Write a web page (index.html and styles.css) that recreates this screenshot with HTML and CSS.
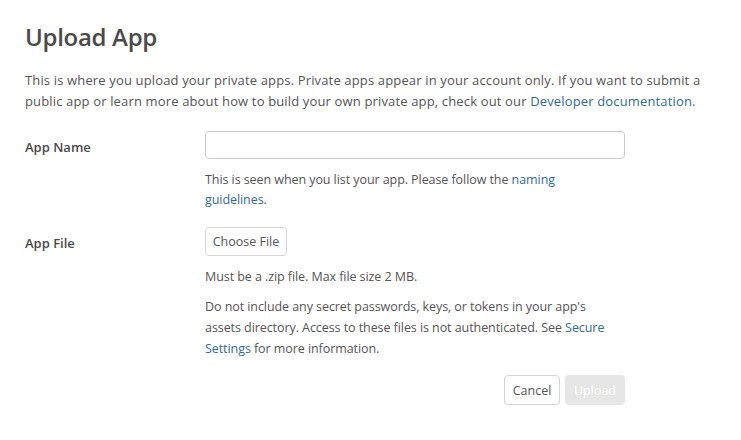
FILE: index.html
```html
<!DOCTYPE html>
<html lang="en">
<head>
<meta charset="utf-8">
<title>Upload App</title>
<link rel="stylesheet" href="styles.css">
</head>
<body>
<main class="page">
  <h1 class="title">Upload App</h1>
  <p class="intro">This is where you upload your private apps. Private apps appear in your account only. If you want to submit a public app or learn more about how to build your own private app, check out our <a href="#" class="link">Developer documentation</a>.</p>
  <form class="form">
    <div class="row">
      <label class="label" for="app-name">App Name</label>
      <div class="field">
        <input class="input" id="app-name" type="text">
        <p class="hint">This is seen when you list your app. Please follow the <a href="#" class="link">naming guidelines</a>.</p>
      </div>
    </div>
    <div class="row">
      <label class="label">App File</label>
      <div class="field">
        <button type="button" class="btn btn-file">Choose File</button>
        <p class="hint">Must be a .zip file. Max file size 2 MB.</p>
        <p class="hint hint-long">Do not include any secret passwords, keys, or tokens in your app's assets directory. Access to these files is not authenticated. See <a href="#" class="link">Secure Settings</a> for more information.</p>
      </div>
    </div>
    <div class="actions">
      <button type="button" class="btn btn-action">Cancel</button>
      <button type="button" class="btn btn-action btn-disabled" disabled>Upload</button>
    </div>
  </form>
</main>
</body>
</html>
```

FILE: styles.css
```css
* { box-sizing: border-box; }
html, body { margin: 0; background: #fff; }
body {
  font-family: "Open Sans", "Noto Sans", sans-serif;
  font-size: 13px;
  color: #555;
  letter-spacing: 0.15px;
}
.page {
  padding: 21px 25px 0 25px;
  width: 741px;
}
.title {
  margin: 0;
  font-size: 24px;
  font-weight: 600;
  line-height: 32px;
  color: #4a4a4a;
  letter-spacing: -0.3px;
}
.intro {
  margin: 17px 0 0 0;
  line-height: 21px;
}
.link { color: #2e6b9e; text-decoration: none; }
.form { margin-top: 19px; width: 600px; }
.row { display: flex; }
.label {
  width: 180px;
  flex: none;
  font-weight: 600;
  color: #4a4a4a;
  line-height: 28px;
  padding-top: 2px;
  letter-spacing: 0;
}
.field { width: 420px; }
.input {
  display: block;
  width: 420px;
  height: 28px;
  border: 1px solid #ccc;
  border-radius: 4px;
  margin: 0;
}
.hint {
  margin: 11px 0 0 0;
  line-height: 20px;
  font-size: 12.5px;
  letter-spacing: -0.07px;
  max-width: 404px;
}
.row + .row { margin-top: 17px; }
.btn {
  display: block;
  height: 29px;
  padding: 0 8px;
  border: 1px solid #d6d6d6;
  border-radius: 4px;
  background: #fff;
  font-family: inherit;
  font-size: 12.5px;
  color: #555;
  letter-spacing: 0;
}
.btn-file { width: 82px; padding: 0; }
.hint-long { margin-top: 9px; line-height: 21px; }
.actions {
  display: flex;
  justify-content: flex-end;
  gap: 5px;
  margin-top: 16px;
}
.btn-action { height: 30px; width: 56px; padding: 0; }
.btn-disabled {
  background: #e6e6e6;
  border-color: #e6e6e6;
  color: #fff;
  width: 60px;
}
```
